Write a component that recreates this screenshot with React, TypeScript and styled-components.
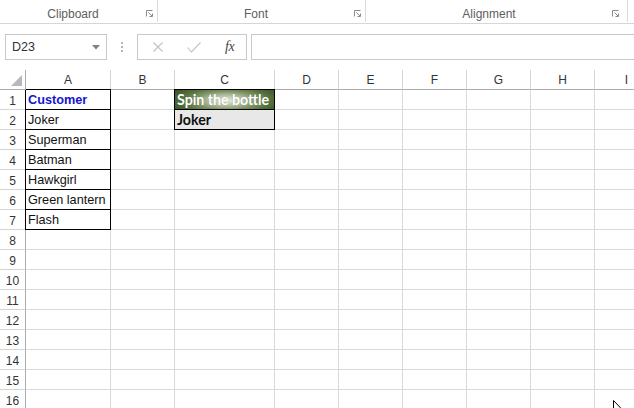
import React from "react";
import styled, { createGlobalStyle } from "styled-components";

const GlobalStyle = createGlobalStyle`
  html, body { margin: 0; padding: 0; background: #ffffff; overflow: hidden; }
  body { font-family: "Liberation Sans", Arial, sans-serif; }
  * { box-sizing: border-box; }
`;

const Frame = styled.div`
  position: relative;
  width: 634px;
  height: 408px;
  overflow: hidden;
  background: #ffffff;
`;

/* ---------- Ribbon ---------- */
const Ribbon = styled.div`
  display: flex;
  height: 24px;
  border-bottom: 1px solid #d6d6d6;
  background: #ffffff;
`;

const Group = styled.div<{ $w: number; $pad: number }>`
  display: flex;
  align-items: flex-end;
  flex: 0 0 ${(p) => p.$w}px;
  height: 22px;
  padding: 0 ${(p) => p.$pad}px 1px 0;
  border-right: 1px solid #dadada;
`;

const GroupLabel = styled.div`
  flex: 1;
  text-align: center;
  font-family: "Liberation Sans", Arial, sans-serif;
  font-size: 12px;
  line-height: 14px;
  color: #5e5e5e;
`;

const Launcher = styled.svg`
  display: block;
  width: 7px;
  height: 7px;
  margin-bottom: 4px;
`;

/* ---------- Formula bar ---------- */
const FormulaBar = styled.div`
  display: flex;
  align-items: flex-start;
  height: 46px;
  padding: 10px 0 0 5px;
`;

const NameBox = styled.div`
  display: flex;
  align-items: center;
  justify-content: space-between;
  flex: 0 0 102px;
  height: 26px;
  padding: 0 6px 0 6px;
  border: 1px solid #c9c9c9;
  font-family: "Liberation Sans", Arial, sans-serif;
  font-size: 12.5px;
  color: #333333;
`;

const Grip = styled.div`
  display: flex;
  flex-direction: column;
  align-items: center;
  justify-content: center;
  gap: 2px;
  flex: 0 0 30px;
  height: 26px;
`;

const GripDot = styled.span`
  display: block;
  width: 2px;
  height: 2px;
  background: #b4b4b4;
`;

const ButtonBox = styled.div`
  display: flex;
  align-items: center;
  flex: 0 0 110px;
  height: 26px;
  padding-left: 15px;
  border: 1px solid #c9c9c9;
`;

const IconSlot = styled.div<{ $w: number }>`
  display: flex;
  align-items: center;
  flex: 0 0 ${(p) => p.$w}px;
`;

const Fx = styled.span`
  font-family: "Liberation Serif", "Times New Roman", serif;
  font-style: italic;
  font-size: 14px;
  color: #444444;
  letter-spacing: -0.5px;
`;

const FormulaInput = styled.div`
  flex: 1;
  height: 26px;
  margin-left: 4px;
  border: 1px solid #c9c9c9;
  border-right: none;
`;

/* ---------- Sheet ---------- */
const Sheet = styled.div`
  display: grid;
  grid-template-columns: 26px 85px 64px 100px repeat(6, 64px);
  grid-auto-rows: 20px;
`;

const Corner = styled.div`
  position: relative;
  border-right: 1px solid #ababab;
  border-bottom: 1px solid #ababab;
  background: #ffffff;
`;

const CornerTriangle = styled.svg`
  position: absolute;
  right: 3px;
  bottom: 3px;
  width: 11px;
  height: 11px;
`;

const ColHeader = styled.div`
  display: flex;
  align-items: center;
  justify-content: center;
  border-right: 1px solid #d4d4d4;
  border-bottom: 1px solid #ababab;
  font-family: "Liberation Sans", Arial, sans-serif;
  font-size: 12px;
  color: #333333;
  background: #ffffff;
`;

const RowHeader = styled.div`
  display: flex;
  align-items: center;
  justify-content: center;
  padding-top: 2px;
  border-right: 1px solid #ababab;
  border-bottom: 1px solid #d4d4d4;
  font-family: "Liberation Sans", Arial, sans-serif;
  font-size: 12px;
  color: #333333;
  background: #ffffff;
`;

type Variant = "plain" | "title" | "spin" | "result";

const Cell = styled.div<{ $boxed?: boolean; $variant?: Variant }>`
  padding-left: 2px;
  white-space: nowrap;
  overflow: visible;
  font-family: ${(p) =>
    p.$variant === "spin" || p.$variant === "result"
      ? `"Lato", "Liberation Sans", sans-serif`
      : `"Liberation Sans", Arial, sans-serif`};
  font-size: ${(p) =>
    p.$variant === "spin" || p.$variant === "result" ? "14.2px" : "12.7px"};
  line-height: ${(p) =>
    p.$variant === "spin" || p.$variant === "result" ? "20px" : "20px"};
  font-weight: ${(p) => (p.$variant && p.$variant !== "plain" ? 700 : 400)};
  color: ${(p) =>
    p.$variant === "title" ? "#1414d2" : p.$variant === "spin" ? "#ffffff" : "#111111"};
  background: ${(p) =>
    p.$variant === "spin"
      ? "radial-gradient(ellipse 58% 90% at 52% 55%, #e9ecdf 0%, #b9c3a8 28%, #7d9163 55%, #53703d 78%, #3e5a2b 100%)"
      : p.$variant === "result"
      ? "#e8e8e8"
      : "#ffffff"};
  border-right: 1px solid ${(p) => (p.$boxed ? "#000000" : "#dadada")};
  border-bottom: 1px solid ${(p) => (p.$boxed ? "#000000" : "#dadada")};
  box-shadow: ${(p) => (p.$boxed ? "-1px 0 0 #000000, 0 -1px 0 #000000, -1px -1px 0 #000000" : "none")};
  text-shadow: ${(p) => (p.$variant === "spin" ? "0 0 1px rgba(40,60,30,0.35)" : "none")};
`;

const Cursor = styled.svg`
  position: absolute;
  left: 613px;
  top: 400px;
  width: 12px;
  height: 19px;
`;

const columns = ["A", "B", "C", "D", "E", "F", "G", "H", "I"];

type CellData = { text: string; boxed?: boolean; variant?: Variant };

const data: Record<string, CellData> = {
  A1: { text: "Customer", boxed: true, variant: "title" },
  A2: { text: "Joker", boxed: true },
  A3: { text: "Superman", boxed: true },
  A4: { text: "Batman", boxed: true },
  A5: { text: "Hawkgirl", boxed: true },
  A6: { text: "Green lantern", boxed: true },
  A7: { text: "Flash", boxed: true },
  C1: { text: "Spin the bottle", boxed: true, variant: "spin" },
  C2: { text: "Joker", boxed: true, variant: "result" },
};

const LauncherIcon = () => (
  <Launcher viewBox="0 0 7 7">
    <path d="M0.5 6.5 V0.5 H6.5" fill="none" stroke="#8a8a8a" strokeWidth="1" />
    <path d="M2.5 2.5 L6 6" fill="none" stroke="#8a8a8a" strokeWidth="1" />
    <path d="M3.5 6.5 H6.5 V3.5" fill="none" stroke="#8a8a8a" strokeWidth="1" />
  </Launcher>
);

const groups = [
  { label: "Clipboard", w: 158, pad: 4 },
  { label: "Font", w: 208, pad: 4 },
  { label: "Alignment", w: 262, pad: 8 },
];

export default function App() {
  const rows = Array.from({ length: 16 }, (_, i) => i + 1);
  return (
    <>
      <GlobalStyle />
      <Frame>
        <Ribbon>
          {groups.map((g) => (
            <Group key={g.label} $w={g.w} $pad={g.pad}>
              <GroupLabel>{g.label}</GroupLabel>
              <LauncherIcon />
            </Group>
          ))}
        </Ribbon>

        <FormulaBar>
          <NameBox>
            <span>D23</span>
            <svg width="8" height="5" viewBox="0 0 8 5">
              <polygon points="0,0 8,0 4,4.5" fill="#808080" />
            </svg>
          </NameBox>
          <Grip>
            <GripDot />
            <GripDot />
            <GripDot />
          </Grip>
          <ButtonBox>
            <IconSlot $w={34}>
              <svg width="10" height="10" viewBox="0 0 10 10">
                <path d="M0.5 0.5 L9.5 9.5 M9.5 0.5 L0.5 9.5" stroke="#c2c2c2" strokeWidth="1.1" fill="none" />
              </svg>
            </IconSlot>
            <IconSlot $w={38}>
              <svg width="14" height="11" viewBox="0 0 14 11">
                <path d="M0.5 5.5 L4.5 10 L13.5 0.5" stroke="#c2c2c2" strokeWidth="1.1" fill="none" />
              </svg>
            </IconSlot>
            <IconSlot $w={20}>
              <Fx>fx</Fx>
            </IconSlot>
          </ButtonBox>
          <FormulaInput />
        </FormulaBar>

        <Sheet>
          <Corner>
            <CornerTriangle viewBox="0 0 11 11">
              <polygon points="11,0 11,11 0,11" fill="#b8b8b8" />
            </CornerTriangle>
          </Corner>
          {columns.map((c) => (
            <ColHeader key={c}>{c}</ColHeader>
          ))}
          {rows.map((r) => (
            <React.Fragment key={r}>
              <RowHeader>{r}</RowHeader>
              {columns.map((c) => {
                const d = data[`${c}${r}`];
                return (
                  <Cell key={c} $boxed={d?.boxed} $variant={d?.variant}>
                    {d?.text ?? ""}
                  </Cell>
                );
              })}
            </React.Fragment>
          ))}
        </Sheet>

        <Cursor viewBox="0 0 12 19">
          <path
            d="M0.5 0.5 L0.5 15.5 L4 12 L6.5 18 L8.5 17 L6 11.5 L11 11.5 Z"
            fill="#ffffff"
            stroke="#000000"
            strokeWidth="1"
          />
        </Cursor>
      </Frame>
    </>
  );
}
